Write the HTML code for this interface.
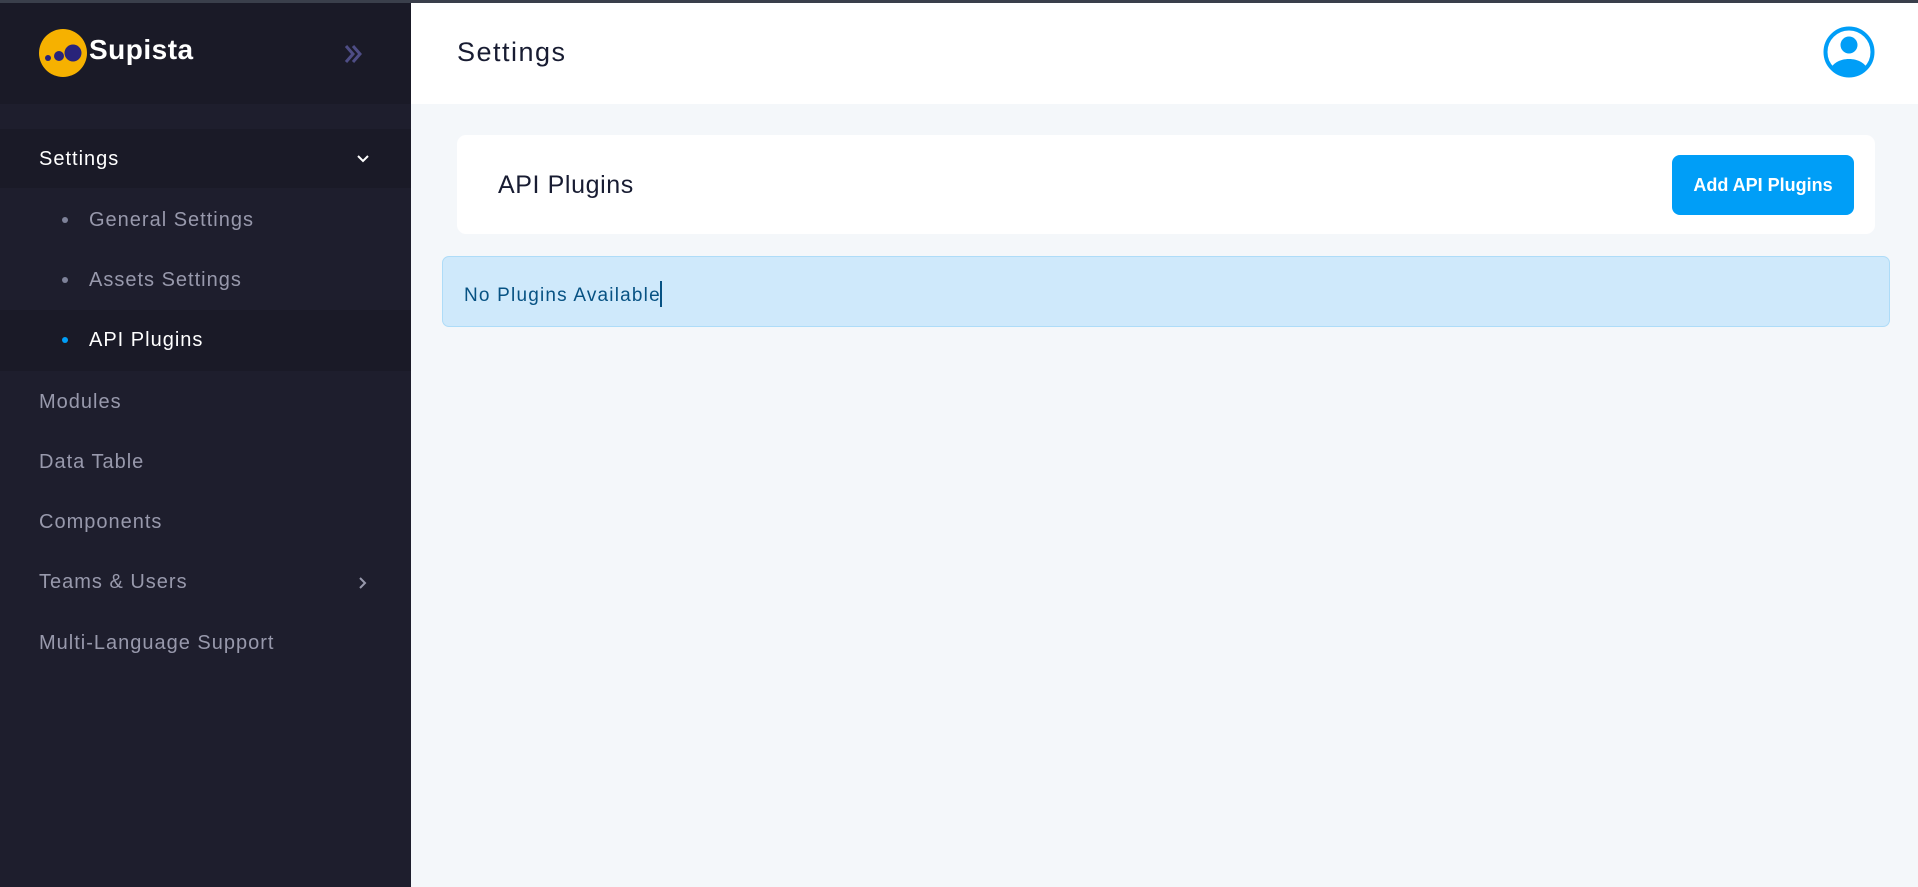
<!DOCTYPE html>
<html><head><meta charset="utf-8"><style>
*{margin:0;padding:0;box-sizing:border-box}
body{width:1918px;height:887px;overflow:hidden;background:#f4f7fa;font-family:"Liberation Sans",sans-serif;position:relative}
.a{position:absolute}
#side{left:0;top:0;width:411px;height:887px;background:#1e1e2d}
#topline{left:0;top:0;width:1918px;height:3px;background:#3a3f4b;z-index:5}
#brand{left:0;top:0;width:411px;height:104px;background:#1a1a27}
.it{position:absolute;left:39px;font-size:20px;color:#9899ac;line-height:24px;letter-spacing:1px}
.sub{position:absolute;left:89px;font-size:20px;color:#9899ac;line-height:24px;letter-spacing:1px}
.dot{position:absolute;left:62px;width:6px;height:6px;border-radius:50%;background:#7e8299}
</style></head><body>
<div class="a" id="topline"></div>
<div class="a" id="side"></div>
<div class="a" id="brand"></div>
<svg class="a" style="left:39px;top:29px" width="50" height="50" viewBox="0 0 50 50">
<circle cx="24" cy="24" r="24" fill="#f6b100"/>
<circle cx="34" cy="24" r="8.5" fill="#29237a"/>
<circle cx="20" cy="27" r="5" fill="#29237a"/>
<circle cx="9" cy="29" r="3" fill="#29237a"/>
</svg>
<div class="a" style="left:89px;top:34px;font-size:28px;font-weight:bold;color:#fff;line-height:32px;letter-spacing:0.5px">Supista</div>
<svg class="a" style="left:342px;top:42px" width="24" height="24" viewBox="0 0 24 24" fill="none" stroke="#4e4d85" stroke-width="3"><path d="M4 4l7 8-7 8M11 4l7 8-7 8"/></svg>
<div class="a" style="left:0;top:129px;width:411px;height:59px;background:#1a1a27"></div>
<div class="it" style="top:147px;color:#fff">Settings</div>
<svg class="a" style="left:355px;top:152px" width="16" height="14" viewBox="0 0 16 14" fill="none" stroke="#fff" stroke-width="2"><path d="M3 4l5 5 5-5"/></svg>
<div class="dot" style="top:217px"></div><div class="sub" style="top:208px">General Settings</div>
<div class="dot" style="top:277px"></div><div class="sub" style="top:268px">Assets Settings</div>
<div class="a" style="left:0;top:310px;width:411px;height:61px;background:#1a1a27"></div>
<div class="dot" style="top:337px;background:#009ef7"></div><div class="sub" style="top:328px;color:#fff">API Plugins</div>
<div class="it" style="top:390px">Modules</div>
<div class="it" style="top:450px">Data Table</div>
<div class="it" style="top:510px">Components</div>
<div class="it" style="top:570px">Teams &amp; Users</div>
<svg class="a" style="left:355px;top:575px" width="14" height="16" viewBox="0 0 14 16" fill="none" stroke="#9899ac" stroke-width="2"><path d="M5 3l5 5-5 5"/></svg>
<div class="it" style="top:631px">Multi-Language Support</div>
<div class="a" style="left:411px;top:0;width:1507px;height:104px;background:#fff"></div>
<div class="a" style="left:457px;top:36px;font-size:27px;color:#181c32;line-height:32px;letter-spacing:1.5px">Settings</div>
<svg class="a" style="left:1823px;top:26px" width="52" height="52" viewBox="0 0 52 52">
<defs><clipPath id="c"><circle cx="26" cy="26" r="22"/></clipPath></defs>
<circle cx="26" cy="26" r="23.5" fill="#fff" stroke="#009ef7" stroke-width="4"/>
<circle cx="26" cy="19" r="8.5" fill="#009ef7"/>
<path clip-path="url(#c)" d="M6 46c3-9 11-13 20-13s17 4 20 13v8H6z" fill="#009ef7"/>
</svg>
<div class="a" style="left:457px;top:135px;width:1418px;height:99px;background:#fff;border-radius:9px"></div>
<div class="a" style="left:498px;top:170px;font-size:25px;color:#181c32;line-height:30px;letter-spacing:0.6px">API Plugins</div>
<div class="a" style="left:1672px;top:155px;width:182px;height:60px;background:#009ef7;border-radius:8px;color:#fff;font-weight:bold;font-size:18px;line-height:60px;text-align:center">Add API Plugins</div>
<div class="a" style="left:442px;top:256px;width:1448px;height:71px;background:#cfe9fb;border:1px solid #aedcf8;border-radius:7px"></div>
<div class="a" style="left:464px;top:281px;font-size:19px;color:#075283;line-height:24px;letter-spacing:1.2px">No Plugins Available<span style="display:inline-block;width:2px;height:26px;background:#075283;vertical-align:-6px;margin-left:-1px"></span></div>
</body></html>
